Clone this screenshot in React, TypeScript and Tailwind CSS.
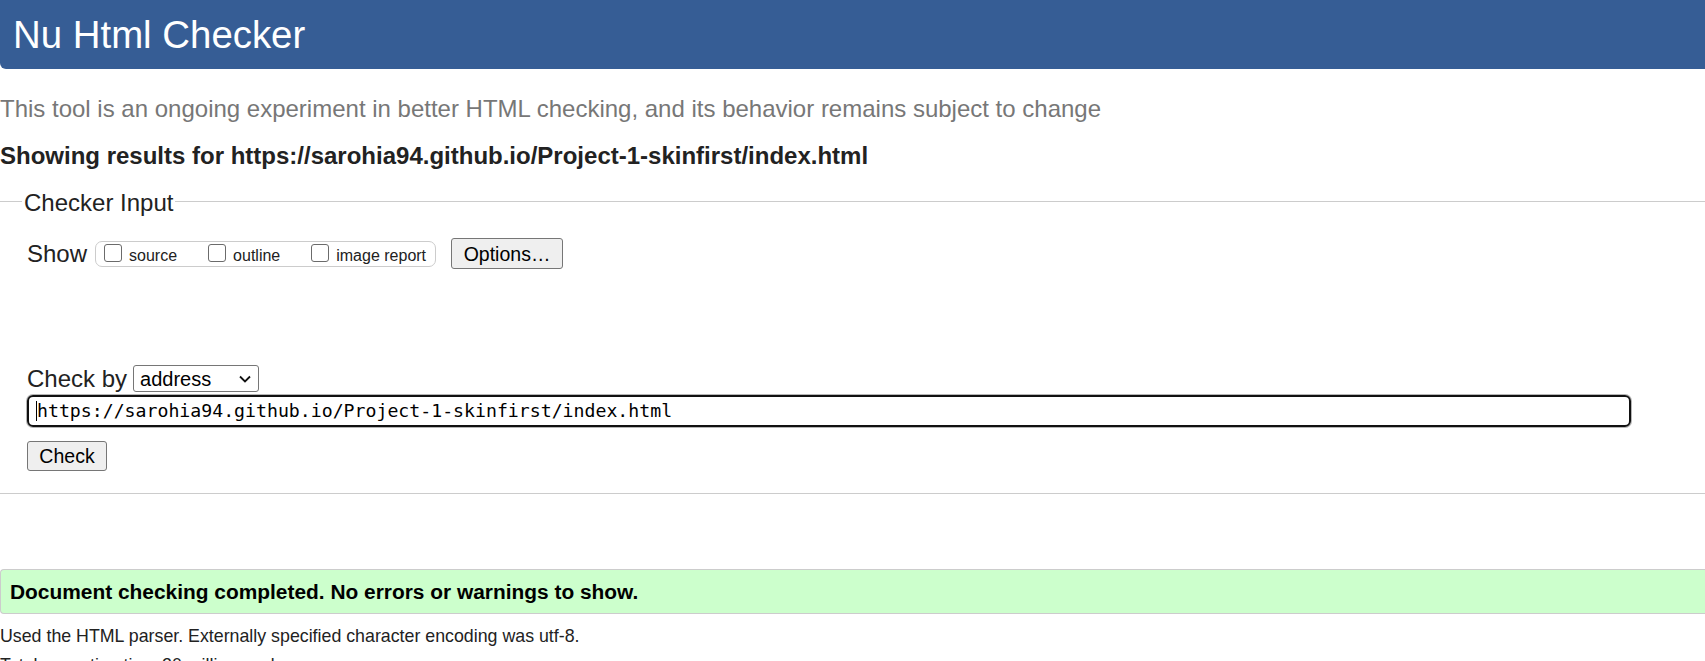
import React from 'react';

function Box({ label }: { label: string }) {
  return (
    <div className="flex items-start">
      <span className="mt-[1px] block w-[18px] h-[18px] rounded-[3px] border-[1.5px] border-[#6b6b6b] bg-white" />
      <span className="ml-[7px] mt-[4px] text-[16px] leading-[18px] text-[#222]">{label}</span>
    </div>
  );
}

export default function App() {
  return (
    <div className="w-[1705px] h-[661px] overflow-hidden bg-white font-['Liberation_Sans',Arial,sans-serif] text-[#222]">
      <h1 className="h-[69px] bg-[#365d95] rounded-bl-[6px] pl-[13px] pt-[13px] text-[38.4px] leading-[44px] text-white">
        Nu Html Checker
      </h1>

      <p className="mt-[26px] text-[24px] leading-[28px] text-[#777] whitespace-nowrap">
        This tool is an ongoing experiment in better HTML checking, and its behavior remains subject to change
      </p>
      <p className="mt-[19px] text-[24px] leading-[28px] font-bold whitespace-nowrap">
        Showing results for https://sarohia94.github.io/Project-1-skinfirst/index.html
      </p>

      <fieldset className="mt-[15px] w-full border-t border-b border-[#cccccc] pb-[22px]">
        <legend className="ml-[22px] px-[2px] pt-[4px] text-[24px] leading-[28px]">Checker Input</legend>

        <div className="pl-[26px]">
          <div className="mt-[21px] flex items-center h-[31px]">
            <span className="ml-[1px] text-[24px] leading-[28px]">Show</span>
            <div className="ml-[8px] flex items-start gap-[31px] w-[341px] h-[26px] border border-[#cccccc] rounded-[7px] pl-[8px] pt-[1px]">
              <Box label="source" />
              <Box label="outline" />
              <Box label="image report" />
            </div>
            <button className="ml-[15px] w-[112px] h-[31px] bg-[#efefef] border border-[#767676] rounded-[3px] text-[19.5px] leading-[22px] text-black">
              Options…
            </button>
          </div>

          <div className="mt-[96px] flex items-center h-[27px]">
            <span className="ml-[1px] text-[24px] leading-[28px]">Check by</span>
            <div className="ml-[6px] flex items-center justify-between w-[126px] h-[27px] border border-[#767676] rounded-[3px] pl-[6px] pr-[7px] bg-white">
              <span className="text-[20px] leading-[22px] text-black">address</span>
              <svg width="12" height="8" viewBox="0 0 12 8" fill="none">
                <path d="M1 1.5 L6 6.5 L11 1.5" stroke="#111" strokeWidth="1.8" />
              </svg>
            </div>
          </div>

          <div className="mt-[3px] ml-[1px] flex items-center w-[1604px] h-[32px] border-2 border-[#111] rounded-[6px] shadow-[0_0_0_1px_#b5b5b5] pl-[7px]">
            <span className="block w-[1px] h-[20px] bg-black" />
            <span className="font-['DejaVu_Sans_Mono',monospace] text-[18.2px] leading-[22px] text-black whitespace-nowrap">
              https://sarohia94.github.io/Project-1-skinfirst/index.html
            </span>
          </div>

          <button className="mt-[14px] ml-[1px] block w-[80px] h-[30px] bg-[#efefef] border border-[#767676] rounded-[3px] text-[19.5px] leading-[22px] text-black">
            Check
          </button>
        </div>
      </fieldset>

      <div className="mt-[75px] flex items-center h-[45px] bg-[#ccffcc] border border-r-0 border-[#cccccc] rounded-l-[4px] pl-[9px]">
        <span className="text-[20.9px] leading-[24px] font-bold text-black whitespace-nowrap">
          Document checking completed. No errors or warnings to show.
        </span>
      </div>

      <p className="mt-[12px] text-[17.8px] leading-[20px] whitespace-nowrap">
        Used the HTML parser. Externally specified character encoding was utf-8.
      </p>
      <p className="mt-[9px] text-[17.8px] leading-[20px] whitespace-nowrap">Total execution time 20 milliseconds.</p>
    </div>
  );
}
